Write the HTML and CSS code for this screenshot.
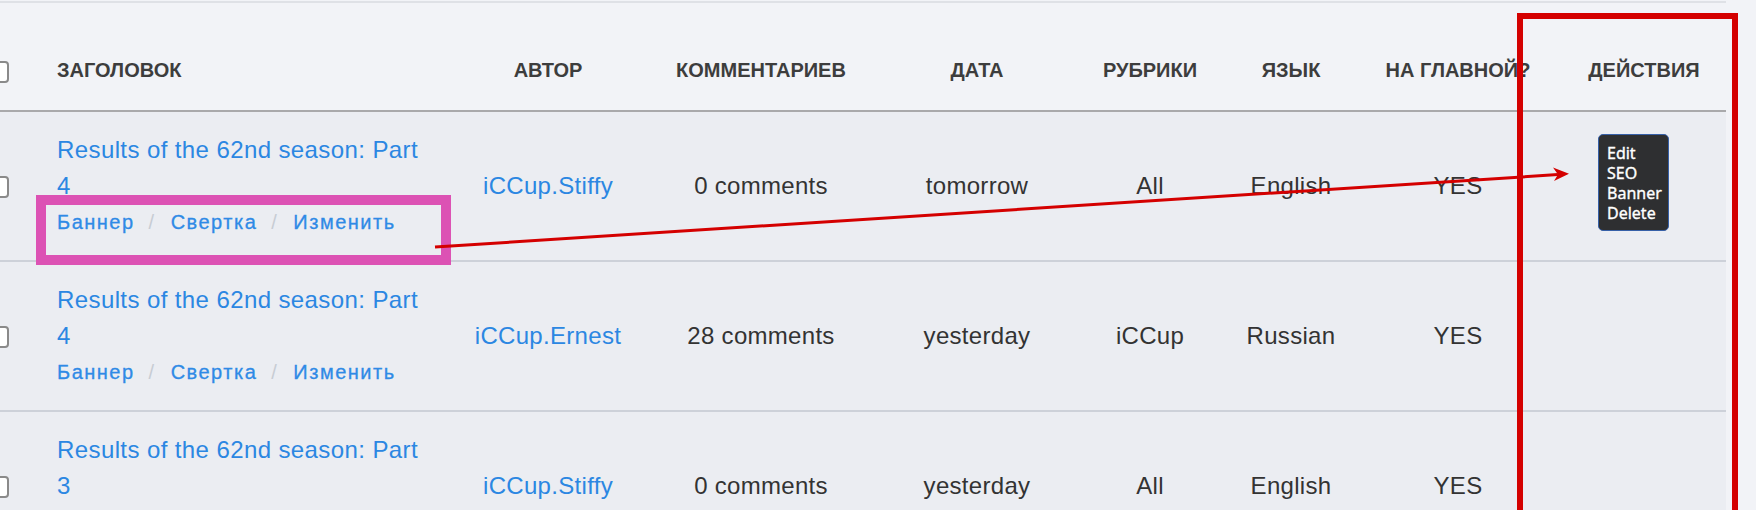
FILE: index.html
```html
<!DOCTYPE html>
<html lang="ru">
<head>
<meta charset="utf-8">
<title>Posts</title>
<link rel="stylesheet" href="styles.css">
</head>
<body>
<div class="page">
  <table class="posts">
    <colgroup>
      <col class="w-check">
      <col class="w-title">
      <col class="w-author">
      <col class="w-comments">
      <col class="w-date">
      <col class="w-rubric">
      <col class="w-lang">
      <col class="w-main">
      <col class="w-actions">
    </colgroup>
    <thead>
      <tr>
        <th class="cell-check"><span class="cb"></span></th>
        <th class="cell-title">Заголовок</th>
        <th>Автор</th>
        <th>Комментариев</th>
        <th>Дата</th>
        <th>Рубрики</th>
        <th>Язык</th>
        <th>На главной?</th>
        <th class="cell-actions-h">Действия</th>
      </tr>
    </thead>
    <tbody>
      <tr>
        <td class="cell-check"><span class="cb"></span></td>
        <td class="cell-title">
          <a class="title-link" href="#">Results of the 62nd season: Part 4</a>
          <div class="row-links"><a href="#">Баннер</a><span class="sep">/</span><a href="#">Свертка</a><span class="sep">/</span><a href="#">Изменить</a></div>
        </td>
        <td><a class="author" href="#">iCCup.Stiffy</a></td>
        <td>0 comments</td>
        <td>tomorrow</td>
        <td>All</td>
        <td>English</td>
        <td>YES</td>
        <td class="cell-actions">
          <ul class="menu">
            <li>Edit</li>
            <li>SEO</li>
            <li>Banner</li>
            <li>Delete</li>
          </ul>
        </td>
      </tr>
      <tr>
        <td class="cell-check"><span class="cb"></span></td>
        <td class="cell-title">
          <a class="title-link" href="#">Results of the 62nd season: Part 4</a>
          <div class="row-links"><a href="#">Баннер</a><span class="sep">/</span><a href="#">Свертка</a><span class="sep">/</span><a href="#">Изменить</a></div>
        </td>
        <td><a class="author" href="#">iCCup.Ernest</a></td>
        <td>28 comments</td>
        <td>yesterday</td>
        <td>iCCup</td>
        <td>Russian</td>
        <td>YES</td>
        <td class="cell-actions"></td>
      </tr>
      <tr>
        <td class="cell-check"><span class="cb"></span></td>
        <td class="cell-title">
          <a class="title-link" href="#">Results of the 62nd season: Part 3</a>
          <div class="row-links"><a href="#">Баннер</a><span class="sep">/</span><a href="#">Свертка</a><span class="sep">/</span><a href="#">Изменить</a></div>
        </td>
        <td><a class="author" href="#">iCCup.Stiffy</a></td>
        <td>0 comments</td>
        <td>yesterday</td>
        <td>All</td>
        <td>English</td>
        <td>YES</td>
        <td class="cell-actions"></td>
      </tr>
    </tbody>
  </table>

  <div class="mark mark-pink"></div>
  <div class="mark mark-red"></div>
  <svg class="arrow" width="1756" height="510" viewBox="0 0 1756 510" xmlns="http://www.w3.org/2000/svg">
    <line x1="435" y1="247" x2="1558" y2="174.6" stroke="#d40000" stroke-width="3"/>
    <polygon points="1569,173.8 1553,167.5 1558,174.5 1554,181" fill="#d40000"/>
  </svg>
</div>
</body>
</html>
```

FILE: styles.css
```css
* { box-sizing: border-box; }

html, body {
  margin: 0;
  padding: 0;
  background: #f2f3f7;
}

body {
  font-family: "Liberation Sans", Arial, sans-serif;
  color: #333;
}

.page {
  position: relative;
  width: 1756px;
  height: 510px;
  overflow: hidden;
  padding-top: 1px;
}

.posts {
  width: 1726px;
  table-layout: fixed;
  border-collapse: collapse;
  border-top: 2px solid #dfe1e6;
}

.w-check { width: 42px; }
.w-title { width: 400px; }
.w-author { width: 212px; }
.w-comments { width: 214px; }
.w-date { width: 218px; }
.w-rubric { width: 128px; }
.w-lang { width: 154px; }
.w-main { width: 180px; }
.w-actions { width: 178px; }

.posts thead th {
  background: #f2f3f7;
  font-size: 20px;
  line-height: 24px;
  font-weight: bold;
  color: #3d3d3d;
  text-transform: uppercase;
  text-align: center;
  white-space: nowrap;
  padding: 55px 0 27px;
  border-bottom: 2px solid #a9a9ab;
  vertical-align: middle;
}

.posts thead th.cell-title { text-align: left; padding-left: 15px; }
.posts thead th.cell-actions-h { padding-left: 14px; }

.posts tbody td {
  background: #ebedf2;
  font-size: 24px;
  line-height: 36px;
  letter-spacing: 0.3px;
  color: #333;
  text-align: center;
  vertical-align: middle;
  padding: 20px 0;
  border-top: 2px solid #cdd1d9;
}

.posts tbody tr:first-child td { border-top: none; }

.posts th.cell-check,
.posts td.cell-check {
  text-align: left;
  padding-left: 0;
  padding-right: 0;
}

.cb {
  display: inline-block;
  width: 21px;
  height: 22px;
  margin-left: -12px;
  vertical-align: middle;
  background: #fff;
  border: 2px solid #8a8a8a;
  border-radius: 4px;
}

.posts td.cell-title {
  text-align: left;
  padding-left: 15px;
  padding-right: 15px;
}

a { text-decoration: none; }

.title-link {
  color: #2b87e2;
  letter-spacing: 0.4px;
}

.author { color: #2b87e2; }

.row-links {
  font-size: 20px;
  line-height: 36px;
  letter-spacing: 1.5px;
  white-space: nowrap;
}

.row-links a {
  color: #2f8ae6;
  -webkit-text-stroke: 0.3px #2f8ae6;
}

.row-links .sep {
  color: #c7ccd4;
  margin: 0 15px 0 14px;
}

.posts td.cell-actions {
  text-align: left;
  padding-left: 50px;
}

.menu {
  list-style: none;
  margin: 0 0 7px;
  width: 71px;
  padding: 8px 5px 7px 8px;
  background: #2e2f31;
  border: 1.5px solid #3660a8;
  border-radius: 5px;
  font-family: "Noto Sans", "DejaVu Sans", sans-serif;
  font-size: 16px;
  line-height: 20px;
  letter-spacing: 0;
  color: #fff;
  -webkit-text-stroke: 0.35px #fff;
}

.mark {
  position: absolute;
  pointer-events: none;
}

.mark-pink {
  left: 36px;
  top: 195px;
  width: 415px;
  height: 70px;
  border: 10px solid #dc52b4;
}

.mark-red {
  left: 1517px;
  top: 13px;
  width: 221px;
  height: 540px;
  border: 6px solid #d40000;
}

.arrow {
  position: absolute;
  left: 0;
  top: 0;
  pointer-events: none;
}
```
